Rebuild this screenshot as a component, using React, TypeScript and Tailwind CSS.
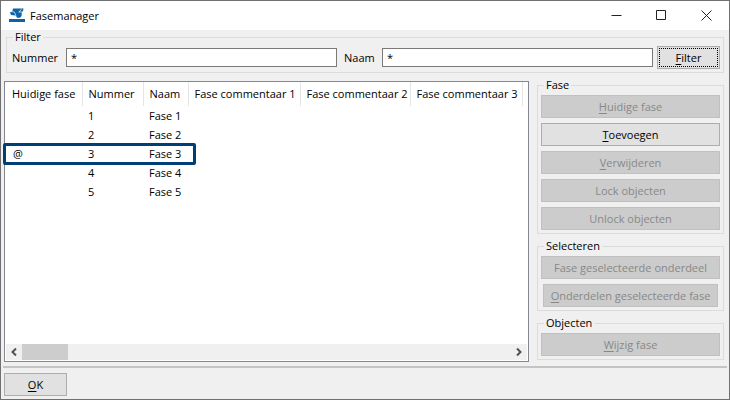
import React from 'react'
import clsx from 'clsx'

const columns = [
  { title: 'Huidige fase', width: 'w-[77px]' },
  { title: 'Nummer', width: 'w-[61px]' },
  { title: 'Naam', width: 'w-[45px]' },
  { title: 'Fase commentaar 1', width: 'w-[112px]' },
  { title: 'Fase commentaar 2', width: 'w-[110px]' },
  { title: 'Fase commentaar 3', width: 'w-[112px]' },
]

const phases = [1, 2, 3, 4, 5]
const current = 3

function AppIcon() {
  return (
    <svg width="17" height="15" viewBox="0 0 17 15" aria-hidden="true">
      <path d="M4 0.5H14.5L14 3.2L12.8 4.2L12.6 8L11 9.8H8L6.8 7.6L2 7L1 4.2L3.4 3.2Z" fill="#0f62a5" />
      <path d="M1.5 3.4L5.2 4L7 7.4M10 4.2L12.4 1.2M9.6 4H14.6" stroke="#ffffff" strokeWidth="0.7" fill="none" />
      <rect x="0" y="11" width="16" height="3" fill="#0f62a5" />
    </svg>
  )
}

function PushButton({
  label,
  hotkey,
  className,
  disabled,
}: {
  label: string
  hotkey?: boolean
  className?: string
  disabled?: boolean
}) {
  return (
    <button
      type="button"
      disabled={disabled}
      className={clsx(
        'h-[23px] shrink-0 border text-center whitespace-nowrap',
        disabled
          ? 'border-[#c0c0c0] bg-[#cccccc] text-[#888888]'
          : 'border-[#adadad] bg-[#e1e1e1] text-black',
        className,
      )}
    >
      {hotkey ? (
        <>
          <span className="underline underline-offset-2">{label[0]}</span>
          {label.slice(1)}
        </>
      ) : (
        label
      )}
    </button>
  )
}

function Group({
  title,
  className,
  children,
}: {
  title: string
  className?: string
  children: React.ReactNode
}) {
  return (
    <fieldset className="min-w-0 border border-[#dcdcdc]">
      <legend className="ml-1.5 px-0.5 leading-[14px]">{title}</legend>
      <div className={className}>{children}</div>
    </fieldset>
  )
}

function TitleBar() {
  return (
    <header className="flex h-[29px] items-center bg-white pl-2">
      <AppIcon />
      <h1 className="ml-1 flex-1">Fasemanager</h1>
      <button type="button" aria-label="Minimaliseren" className="flex h-full w-[45px] items-center justify-center">
        <svg width="11" height="11" viewBox="0 0 11 11" stroke="#222222" fill="none">
          <path d="M0.5 5.5H10.5" />
        </svg>
      </button>
      <button type="button" aria-label="Maximaliseren" className="flex h-full w-[45px] items-center justify-center">
        <svg width="11" height="11" viewBox="0 0 11 11" stroke="#222222" fill="none">
          <path d="M0.5 0.5H9.5V9.5H0.5Z" />
        </svg>
      </button>
      <button type="button" aria-label="Sluiten" className="flex h-full w-[45px] items-center justify-center">
        <svg width="11" height="11" viewBox="0 0 11 11" stroke="#222222" fill="none">
          <path d="M0.5 0.5L10.5 10.5M10.5 0.5L0.5 10.5" />
        </svg>
      </button>
    </header>
  )
}

function FilterBar() {
  return (
    <div className="px-[5px]">
      <Group title="Filter" className="flex items-center pt-0.5 pr-[3px] pb-[3px] pl-[5px]">
        <label htmlFor="nummer" className="w-[54px]">
          Nummer
        </label>
        <input
          id="nummer"
          defaultValue="*"
          className="h-[19px] min-w-0 flex-1 border border-[#7a7a7a] bg-white px-1"
        />
        <label htmlFor="naam" className="ml-[7px] w-[38px]">
          Naam
        </label>
        <input
          id="naam"
          defaultValue="*"
          className="h-[19px] min-w-0 flex-1 border border-[#7a7a7a] bg-white px-1"
        />
        <button type="button" className="ml-1 h-[23px] w-[63px] border border-[#adadad] bg-[#e1e1e1] p-px">
          <span className="flex h-full items-center justify-center border border-dotted border-black">
            <span className="underline underline-offset-2">F</span>ilter
          </span>
        </button>
      </Group>
    </div>
  )
}

function PhaseList() {
  return (
    <div className="mt-[3px] flex min-w-0 flex-1 flex-col border border-[#828790] bg-white">
      <div className="flex-1">
        <table className="w-[517px] table-fixed border-collapse text-left">
          <thead>
            <tr className="h-6">
              {columns.map((column) => (
                <th
                  key={column.title}
                  className={clsx(
                    'border-r border-[#e5e5e5] py-0 pr-0 pl-1.5 font-normal whitespace-nowrap first:pl-[7px]',
                    column.width,
                  )}
                >
                  {column.title}
                </th>
              ))}
            </tr>
          </thead>
          <tbody>
            {phases.map((phase) => (
              <tr key={phase} className="h-[19px]">
                <td className="relative py-0 pl-2">
                  {phase === current && (
                    <>
                      @
                      <span className="absolute -top-px -left-0.5 h-[22px] w-[193px] rounded-xs border-3 border-[#003e78]" />
                    </>
                  )}
                </td>
                <td className="py-0 pl-1.5">{phase}</td>
                <td className="py-0 pl-1.5 whitespace-nowrap">Fase {phase}</td>
                <td />
                <td />
                <td />
              </tr>
            ))}
          </tbody>
        </table>
      </div>
      <div className="mx-px mb-px flex h-4 bg-[#f0f0f0]">
        <button type="button" aria-label="Naar links" className="flex w-4 items-center justify-center">
          <svg width="6" height="8" viewBox="0 0 6 8" stroke="#505050" strokeWidth="2" fill="none">
            <path d="M5 0.5L1.5 4L5 7.5" />
          </svg>
        </button>
        <div className="w-[46px] bg-[#cdcdcd]" />
        <div className="flex-1" />
        <button type="button" aria-label="Naar rechts" className="flex w-4 items-center justify-center">
          <svg width="6" height="8" viewBox="0 0 6 8" stroke="#505050" strokeWidth="2" fill="none">
            <path d="M1 0.5L4.5 4L1 7.5" />
          </svg>
        </button>
      </div>
    </div>
  )
}

function Actions() {
  return (
    <div className="flex w-[187px] shrink-0 flex-col gap-[5px]">
      <Group title="Fase" className="flex flex-col gap-[5px] px-[3px] pt-[3px] pb-[3px]">
        <PushButton label="Huidige fase" hotkey disabled />
        <PushButton label="Toevoegen" hotkey />
        <PushButton label="Verwijderen" hotkey disabled />
        <PushButton label="Lock objecten" disabled />
        <PushButton label="Unlock objecten" disabled />
      </Group>
      <Group title="Selecteren" className="flex flex-col gap-[5px] px-[3px] pt-[3px] pb-[3px]">
        <PushButton label="Fase geselecteerde onderdeel" disabled />
        <PushButton label="Onderdelen geselecteerde fase" hotkey disabled className="mx-0.5" />
      </Group>
      <Group title="Objecten" className="flex flex-col px-[3px] pt-[3px] pb-[3px]">
        <PushButton label="Wijzig fase" hotkey disabled />
      </Group>
    </div>
  )
}

export default function App() {
  return (
    <div className="flex min-h-screen flex-col border border-[#707070] bg-[#f0f0f0] font-['Open_Sans','Noto_Sans',sans-serif] text-[11px] leading-4 text-black">
      <TitleBar />
      <FilterBar />
      <main className="flex flex-1 gap-2 pt-[5px] pr-[5px] pl-[3px]">
        <PhaseList />
        <Actions />
      </main>
      <footer className="mx-0.5 mt-1 border-t-2 border-[#c4c4c4] px-px pt-[5px] pb-[3px]">
        <PushButton label="OK" hotkey className="w-[63px]" />
      </footer>
    </div>
  )
}
